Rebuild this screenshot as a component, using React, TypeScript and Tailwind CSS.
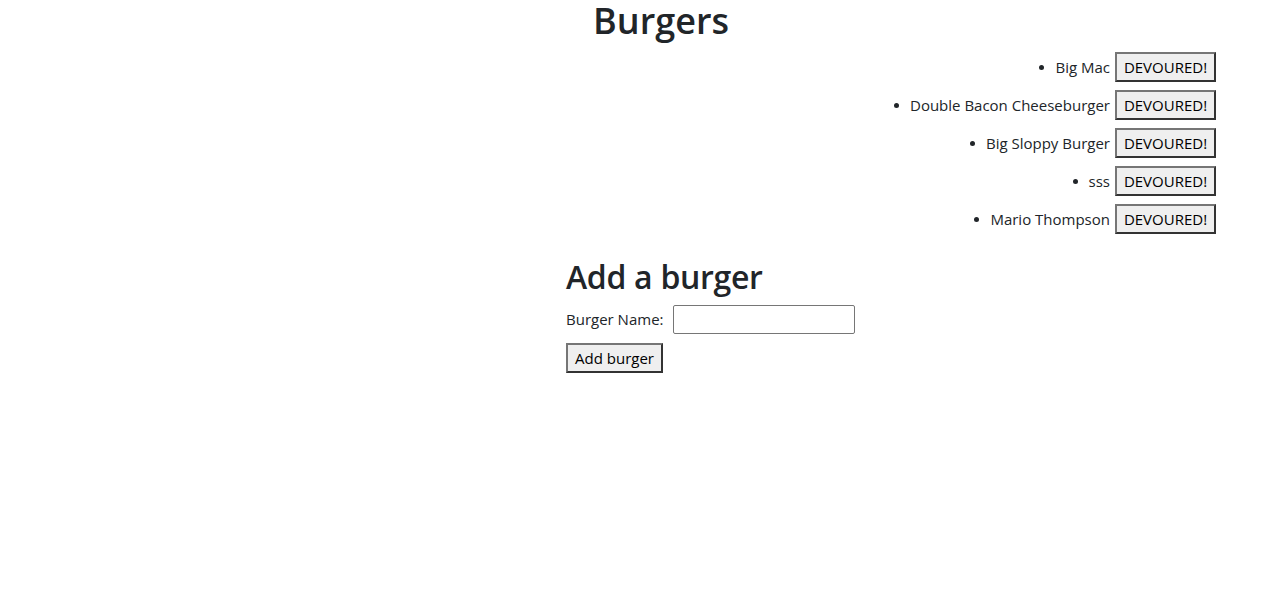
import React from "react";

const burgers = ["Big Mac", "Double Bacon Cheeseburger", "Big Sloppy Burger", "sss", "Mario Thompson"];

export default function App() {
  return (
    <div className="min-h-[595px] bg-white text-[#212529] font-['Open_Sans',sans-serif] text-[15px] leading-[24px]">
      <div className="w-[1110px] ml-[106px]">
        <h1 className="text-center text-[36px] leading-[42px] font-semibold mb-[10px]">Burgers</h1>
        <ul className="mb-[24px]">
          {burgers.map((b) => (
            <li key={b} className="flex justify-end items-center h-[30px] mb-[8px]">
              <span className="w-[5px] h-[5px] rounded-full bg-[#212529] mr-[11px]" />
              <span>{b}</span>
              <button className="ml-[5px] h-[30px] w-[101px] bg-[#efefef] text-black border-2 border-t-[#767676] border-l-[#767676] border-r-[#333333] border-b-[#333333]">
                DEVOURED!
              </button>
            </li>
          ))}
        </ul>
        <div className="pl-[460px]">
          <h2 className="text-[32px] leading-[38px] font-semibold tracking-[-0.3px] mb-[8px]">Add a burger</h2>
          <div className="flex items-center h-[30px] mb-[9px]">
            <label className="w-[107px]">Burger Name:</label>
            <input className="w-[182px] h-[29px] border border-[#767676] rounded-[2px] px-[2px] outline-none" />
          </div>
          <button className="h-[30px] w-[97px] bg-[#efefef] text-black border-2 border-t-[#767676] border-l-[#767676] border-r-[#333333] border-b-[#333333]">
            Add burger
          </button>
        </div>
      </div>
    </div>
  );
}
